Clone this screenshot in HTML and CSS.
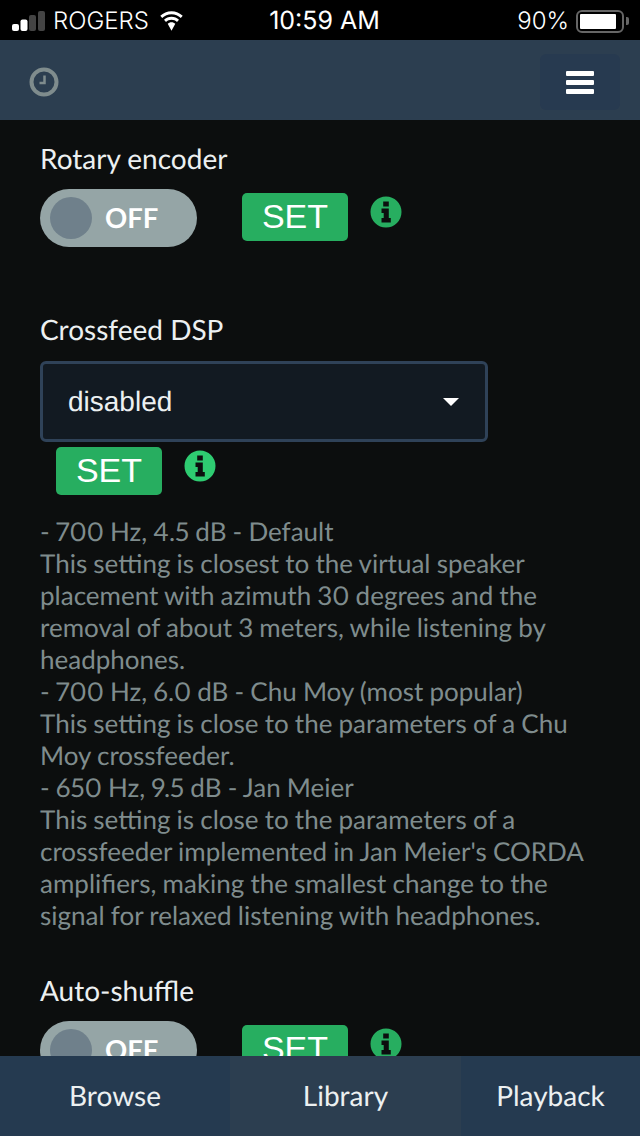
FILE: index.html
```html
<!DOCTYPE html>
<html lang="en">
<head>
<meta charset="utf-8">
<title>Settings</title>
<link rel="stylesheet" href="styles.css">
</head>
<body>
<div class="app">
  <div class="status">
    <div class="status-left">
      <svg class="signal" width="33" height="20" viewBox="0 0 33 20"><rect x="0" y="13" width="7" height="7" rx="2" fill="#fff"/><rect x="8.500" y="8.500" width="7" height="11.500" rx="2" fill="#fff"/><rect x="17" y="4" width="7" height="16" rx="2" fill="#444"/><rect x="26" y="0" width="7" height="20" rx="2" fill="#444"/></svg>
      <span class="carrier">ROGERS</span>
      <svg class="wifi" width="29" height="20" viewBox="0 0 24 20"><path d="M12 3.200c3.600 0 6.900 1.400 9.300 3.700l1.900-2.200C20.300 2 16.300.2 12 .2S3.700 2 .8 4.700l1.900 2.200C5.100 4.600 8.400 3.200 12 3.200z" fill="#fff"/><path d="M12 8.700c2.100 0 4.100.8 5.500 2.200l2-2.200C17.500 6.800 14.900 5.700 12 5.700S6.500 6.800 4.500 8.700l2 2.200c1.400-1.400 3.400-2.200 5.500-2.200z" fill="#fff"/><path d="M12 11.200c-1.500 0-2.800.6-3.800 1.500L12 19.800l3.800-7.100c-1-.9-2.300-1.500-3.800-1.500z" fill="#fff"/></svg>
    </div>
    <div class="status-time">10:59 AM</div>
    <div class="status-right">
      <span class="percent">90%</span>
      <div class="battery"><div class="battery-fill"></div></div>
      <div class="battery-tip"></div>
    </div>
  </div>

  <header class="topbar">
    <svg class="clock" width="30" height="30" viewBox="0 0 30 30"><circle cx="15" cy="15" r="12.500" fill="none" stroke="#7f8c8d" stroke-width="4"/><path d="M15.500 8.500v7.500h-5" fill="none" stroke="#7f8c8d" stroke-width="2.500"/></svg>
    <button class="menu-btn" type="button" aria-label="Menu">
      <span class="bar"></span><span class="bar"></span><span class="bar"></span>
    </button>
  </header>

  <main class="content">
    <div class="label">Rotary encoder</div>
    <div class="control-row">
      <div class="toggle"><span class="knob"></span><span class="toggle-text">OFF</span></div>
      <button class="set" type="button">SET</button>
      <svg class="info" width="32" height="32" viewBox="0 0 32 32"><path fill="#27ae60" fill-rule="evenodd" d="M16 .5a15.500 15.500 0 1 0 0 31 15.500 15.500 0 0 0 0-31zM13.200 5.500h5.600v5h-5.600zM11.500 12.500h7.300v9.500h2v4.500h-9.300V22h2.200v-5h-2.200z"/></svg>
    </div>

    <div class="label label-crossfeed">Crossfeed DSP</div>
    <div class="select"><span>disabled</span><span class="caret"></span></div>
    <div class="control-row set-row">
      <button class="set" type="button">SET</button>
      <svg class="info" width="32" height="32" viewBox="0 0 32 32"><path fill="#2ecc71" fill-rule="evenodd" d="M16 .5a15.500 15.500 0 1 0 0 31 15.500 15.500 0 0 0 0-31zM13.200 5.500h5.600v5h-5.600zM11.500 12.500h7.300v9.500h2v4.500h-9.300V22h2.200v-5h-2.200z"/></svg>
    </div>
    <p class="help">- 700 Hz, 4.5 dB - Default<br>This setting is closest to the virtual speaker placement with azimuth 30 degrees and the removal of about 3 meters, while listening by headphones.<br>- 700 Hz, 6.0 dB - Chu Moy (most popular)<br>This setting is close to the parameters of a Chu Moy crossfeeder.<br>- 650 Hz, 9.5 dB - Jan Meier<br>This setting is close to the parameters of a crossfeeder implemented in Jan Meier's CORDA amplifiers, making the smallest change to the signal for relaxed listening with headphones.</p>

    <div class="label">Auto-shuffle</div>
    <div class="control-row">
      <div class="toggle"><span class="knob"></span><span class="toggle-text">OFF</span></div>
      <button class="set" type="button">SET</button>
      <svg class="info" width="32" height="32" viewBox="0 0 32 32"><path fill="#27ae60" fill-rule="evenodd" d="M16 .5a15.500 15.500 0 1 0 0 31 15.500 15.500 0 0 0 0-31zM13.200 5.500h5.600v5h-5.600zM11.500 12.500h7.300v9.500h2v4.500h-9.300V22h2.200v-5h-2.200z"/></svg>
    </div>
  </main>

  <nav class="tabs">
    <div class="tab tab-browse">Browse</div>
    <div class="tab tab-library">Library</div>
    <div class="tab tab-playback">Playback</div>
  </nav>
</div>
</body>
</html>
```
FILE: styles.css
```css
* { box-sizing: border-box; }
html, body { margin: 0; padding: 0; background: #0c0e0e; }
.app {
  width: 640px;
  height: 1136px;
  display: flex;
  flex-direction: column;
  overflow: hidden;
  font-family: Lato, "Liberation Sans", sans-serif;
  font-size: 26px;
  line-height: 32px;
  color: #ecf0f1;
  text-rendering: geometricPrecision;
}
.status {
  height: 40px;
  flex: none;
  background: #000;
  color: #fff;
  display: grid;
  grid-template-columns: 1fr auto 1fr;
  align-items: center;
  padding: 0 11px 0 12px;
  font-family: Inter, "Liberation Sans", sans-serif;
  font-size: 24px;
  line-height: 42px;
}
.status-left { display: flex; align-items: center; }
.signal { margin-right: 8px; }
.carrier { margin-right: 8px; font-weight: 300; }
.status-time { font-weight: 400; font-size: 25px; margin-left: 8px; }
.status-right { display: flex; align-items: center; justify-content: flex-end; }
.percent { margin-right: 7px; font-weight: 300; }
.battery {
  width: 48px;
  height: 23px;
  border: 2px solid #666;
  border-radius: 6px;
  padding: 2px;
}
.battery-fill { width: 36px; height: 100%; background: #fff; border-radius: 1px; }
.battery-tip { width: 3px; height: 8px; background: #666; margin-left: 2px; border-radius: 0 2px 2px 0; }
.topbar {
  height: 80px;
  flex: none;
  background: #2c3e50;
  display: flex;
  align-items: center;
  justify-content: space-between;
  padding: 4px 20px 0 29px;
}
.clock { display: block; }
.menu-btn {
  width: 80px;
  height: 56px;
  background: #273a50;
  border: 0;
  border-radius: 6px;
  display: flex;
  flex-direction: column;
  align-items: center;
  justify-content: center;
  gap: 4px;
  padding: 0;
}
.bar { width: 28px; height: 5px; background: #fff; border-radius: 1px; }
.content {
  flex: 1;
  min-height: 0;
  overflow: hidden;
  padding: 24px 40px 0;
}
.label { height: 32px; margin-bottom: 13px; color: #ecf0f1; font-size: 28px; line-height: 28px; }
.label-crossfeed { margin-top: 68px; margin-bottom: 14px; }
.control-row { display: flex; align-items: flex-start; }
.toggle {
  width: 157px;
  height: 58px;
  background: #95a5a6;
  border-radius: 29px;
  display: flex;
  align-items: center;
  padding-left: 10px;
  flex: none;
  margin-right: 45px;
}
.knob { width: 42px; height: 42px; background: #6f808b; border-radius: 50%; }
.toggle-text { margin-left: 13px; color: #fff; font-weight: 700; font-size: 27.500px; }
.set {
  width: 106px;
  height: 48px;
  margin-top: 4px;
  flex: none;
  background: #27ae60;
  color: #fff;
  border: 0;
  border-radius: 5px;
  padding: 0 0 2px;
  font-family: "Liberation Sans", sans-serif;
  font-size: 34px;
  line-height: 46px;
}
.info { margin-left: 22px; margin-top: 7px; display: block; flex: none; }
.select {
  width: 448px;
  height: 81px;
  background: #121a22;
  border: 3px solid #2f4258;
  border-radius: 6px;
  display: flex;
  align-items: center;
  justify-content: space-between;
  padding: 0 26px 0 25px;
  font-family: "Liberation Sans", sans-serif;
  font-size: 28px;
  color: #ecf0f1;
}
.caret {
  width: 0;
  height: 0;
  border-left: 8px solid transparent;
  border-right: 8px solid transparent;
  border-top: 8px solid #fff;
}
.set-row { margin-left: 16px; margin-top: 1px; }
.help {
  margin: 20px 0 45px;
  color: #7f8c8d;
  width: 560px;
  font-variant-numeric: proportional-nums;
  word-spacing: -0.5px;
}
.tabs {
  height: 80px;
  flex: none;
  display: flex;
  font-size: 28px;
  line-height: 78px;
  color: #ecf0f1;
}
.tab { text-align: center; background: #253a50; }
.tab-browse { width: 230px; }
.tab-library { width: 231px; background: #2c3e50; }
.tab-playback { width: 179px; }
```
